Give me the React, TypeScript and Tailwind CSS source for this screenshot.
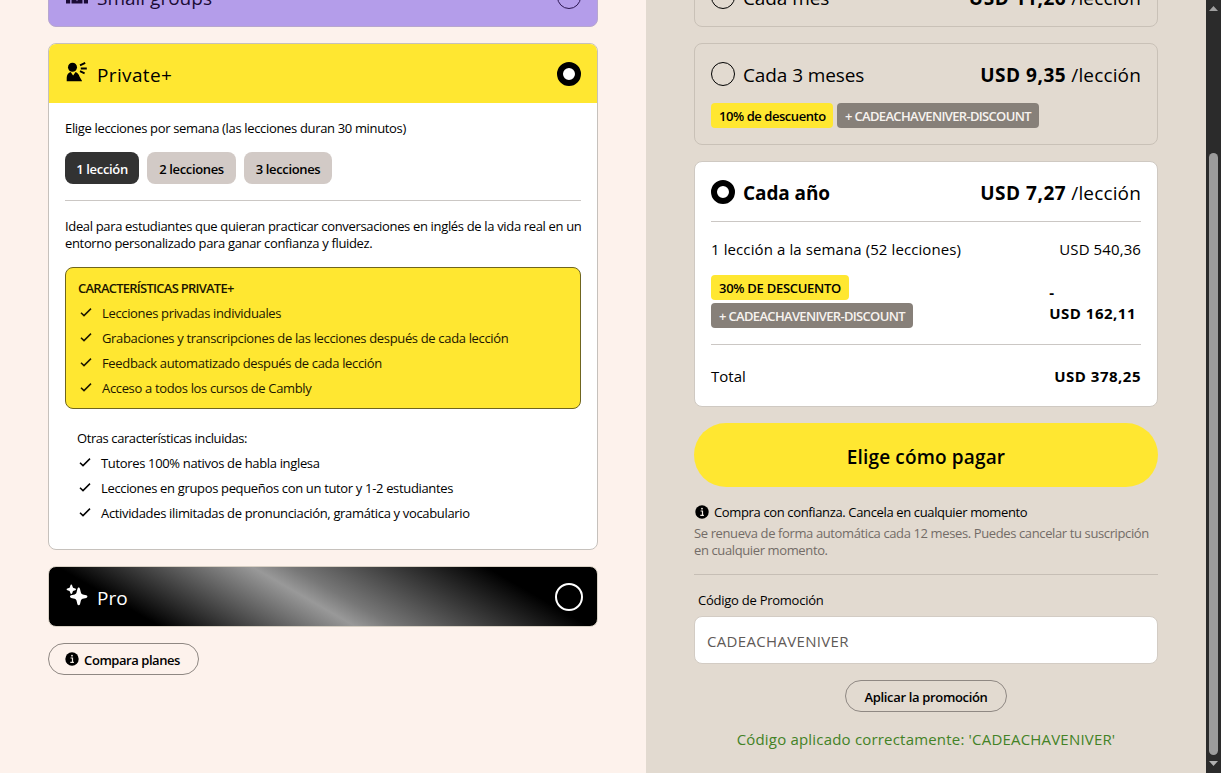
import React from "react";
import { clsx } from "clsx";

const planFeatures: string[] = [
  "Lecciones privadas individuales",
  "Grabaciones y transcripciones de las lecciones después de cada lección",
  "Feedback automatizado después de cada lección",
  "Acceso a todos los cursos de Cambly",
];

const otherFeatures: string[] = [
  "Tutores 100% nativos de habla inglesa",
  "Lecciones en grupos pequeños con un tutor y 1-2 estudiantes",
  "Actividades ilimitadas de pronunciación, gramática y vocabulario",
];

const lessonOptions: { label: string; className: string }[] = [
  { label: "1 lección", className: "w-[74px] bg-[#323232] text-white" },
  { label: "2 lecciones", className: "w-[89px] bg-[#d2cac6] text-black" },
  { label: "3 lecciones", className: "w-[88px] bg-[#d2cac6] text-black" },
];

const GroupIcon = () => (
  <svg width="24" height="24" viewBox="0 0 24 24" fill="currentColor" className="-mt-[3px]">
    <circle cx="12" cy="7" r="4" />
    <circle cx="5" cy="9" r="3" />
    <circle cx="19" cy="9" r="3" />
    <path d="M1 19.500v-3.500c0-2 1-3.500 3-3.500l1.200 1.500v5.500zM6.500 19.500V17c0-2.500 1.500-4.500 3.500-4.500l2 5 2-5c2 0 3.500 2 3.500 4.500v2.500zM18.800 19.500V14l1.200-1.500c2 0 3 1.500 3 3.500v3.500z" />
  </svg>
);

const SpeakerIcon = () => (
  <svg width="24" height="24" viewBox="0 0 24 24" fill="currentColor" className="-mt-[3px]">
    <circle cx="9.500" cy="7.200" r="4.500" />
    <path d="M3.700 21.200v-3.400c0-3 1.600-5.300 4-5.800l2.400 3.400 2.500-3.400c1.900.6 3.200 2.200 4 4.800l2.600 4.400z" />
    <path
      d="M17 5.400l5.200-2.600M17.800 8.500h6M17 11.200l4.600 2.200"
      fill="none"
      stroke="currentColor"
      strokeWidth="1.900"
    />
  </svg>
);

const SparkleIcon = () => (
  <svg width="24" height="24" viewBox="0 0 24 24" fill="currentColor" className="-mt-[3px]">
    <path d="M14.700 4.500c.7 0 1.100.7 1.300 1.500l.9 3.600c.2.900.9 1.600 1.800 1.800l3.600.9c1.500.5 1.500 2.100 0 2.600l-3.600.9c-.9.200-1.600.9-1.800 1.800l-.9 3.600c-.5 1.500-2.100 1.500-2.600 0l-.9-3.600c-.2-.9-.9-1.600-1.800-1.800l-3.600-.9c-1.500-.5-1.500-2.100 0-2.600l3.600-.9c.9-.2 1.600-.9 1.800-1.800l.9-3.600c.2-.8.600-1.500 1.300-1.500z" />
    <path d="M7.300 1.500c.5 0 .8.400.9.900l.5 1.500c.1.500.5.900 1 1l1.500.5c1 .3 1 1.500 0 1.800l-1.500.5c-.5.100-.9.500-1 1l-.5 1.500c-.3 1-1.500 1-1.800 0l-.5-1.500c-.1-.5-.5-.9-1-1l-1.500-.5c-1-.3-1-1.500 0-1.800l1.500-.5c.5-.1.900-.5 1-1l.5-1.500c.1-.5.400-.9.900-.9z" />
  </svg>
);

const InfoIcon = () => (
  <svg width="14" height="14" viewBox="0 0 14 14" className="shrink-0">
    <circle cx="7" cy="7" r="6.700" fill="#000" />
    <path
      d="M5.600 6h1.900v4.300M5.300 10.300h3.600"
      stroke="#f3ece4"
      strokeWidth="1.200"
      fill="none"
    />
    <circle cx="7" cy="3.700" r=".9" fill="#f3ece4" />
  </svg>
);

const FeatureList = ({ items }: { items: string[] }) => (
  <ul>
    {items.map((item) => (
      <li key={item} className="flex h-[25px] items-center">
        <svg
          width="16"
          height="16"
          viewBox="0 0 16 16"
          className="mr-2 -mt-[3px]"
          fill="none"
          stroke="currentColor"
          strokeWidth="1.500"
        >
          <path d="M3 8.700l3 2.900 7-7" />
        </svg>
        {item}
      </li>
    ))}
  </ul>
);

const Radio = ({ checked = false }: { checked?: boolean }) => (
  <span
    className={clsx(
      "block h-6 w-6 shrink-0 rounded-full",
      checked ? "border-[6px] border-black bg-white" : "border border-black",
    )}
  />
);

const Price = ({ amount }: { amount: string }) => (
  <span className="mt-[3px] ml-auto text-[19px] tracking-[0.15px]">
    <b className="tracking-[0.52px]">{amount}</b> /lección
  </span>
);

const badge =
  "flex h-[25px] items-center rounded-[4px] px-2 pt-0.5 text-[13px] font-semibold whitespace-nowrap";

const DiscountCode = () => (
  <span className={clsx(badge, "w-[202px] bg-[#878079] tracking-[-0.67px] text-[#f7f3ef]")}>
    + CADEACHAVENIVER-DISCOUNT
  </span>
);

const Plans = () => (
  <section className="flex w-[646px] flex-col gap-4 bg-[#fdf2ec] pl-12">
    <div className="-mt-[33px] flex h-[60px] w-[550px] shrink-0 items-center rounded-lg border border-[#b7a7cf] bg-[#b49dea] px-4 text-[#1b0b35]">
      <GroupIcon />
      <span className="mt-[3px] ml-2 text-[19px] font-medium">Small groups</span>
      <span className="ml-auto h-6 w-6 rounded-full border border-[#2b1650]" />
    </div>

    <div className="h-[507px] w-[550px] shrink-0 overflow-hidden rounded-lg border border-[#c6c1bc] bg-white">
      <div className="flex h-[59px] items-center bg-[#ffe731] pr-4 pl-[14px]">
        <SpeakerIcon />
        <span className="mt-[3px] ml-[10px] text-[19px] font-medium tracking-[0.35px]">
          Private+
        </span>
        <span className="ml-auto">
          <Radio checked />
        </span>
      </div>

      <div className="px-4 pt-[17px] text-[13px] leading-[17px] tracking-[-0.34px]">
        <p>Elige lecciones por semana (las lecciones duran 30 minutos)</p>
        <div className="mt-[15px] flex gap-2">
          {lessonOptions.map(({ label, className }) => (
            <button
              key={label}
              className={clsx("h-8 rounded-lg pt-0.5 font-semibold", className)}
            >
              {label}
            </button>
          ))}
        </div>
        <hr className="mt-4 border-[#cbc7c4]" />
        <p className="mt-[17px] whitespace-nowrap">
          Ideal para estudiantes que quieran practicar conversaciones en inglés de la vida real en un
          <br />
          entorno personalizado para ganar confianza y fluidez.
        </p>

        <div className="mt-[15px] h-[142px] rounded-lg border border-[#6f651f] bg-[#ffe731] px-3 pt-2 text-[#1c1600]">
          <h3 className="h-[25px] leading-[25px] font-semibold tracking-[-0.75px]">
            CARACTERÍSTICAS PRIVATE+
          </h3>
          <FeatureList items={planFeatures} />
        </div>

        <div className="mt-[17px] px-3">
          <h3 className="h-[25px] leading-[25px] tracking-[-0.42px]">
            Otras características incluidas:
          </h3>
          <FeatureList items={otherFeatures} />
        </div>
      </div>
    </div>

    <div className="flex h-[61px] w-[550px] shrink-0 items-center rounded-lg border border-[#d8d0c4] bg-[linear-gradient(30deg,#000_17%,#999_47%,#777_53%,#000_83%)] pr-4 pl-[15px] text-white">
      <SparkleIcon />
      <span className="mt-[3px] ml-[9px] text-[19px]">Pro</span>
      <span className="ml-auto -mr-0.5 h-7 w-7 rounded-full border-2 border-white" />
    </div>

    <button className="flex h-8 w-[151px] shrink-0 items-center justify-center gap-[5px] rounded-full border border-[#8f8883] pr-0.5 text-[13px] font-semibold tracking-[-0.45px]">
      <InfoIcon />
      <span className="mt-[3px]">Compara planes</span>
    </button>
  </section>
);

const Checkout = () => (
  <section className="flex w-[560px] flex-col bg-[#e2dad0] px-12">
    <div className="-mt-[33px] flex h-[60px] shrink-0 items-center rounded-lg border border-[#c9c1b7] px-4">
      <Radio />
      <span className="mt-[3px] ml-2 text-[19px] tracking-[-0.1px]">Cada mes</span>
      <Price amount="USD 11,26" />
    </div>

    <div className="mt-4 h-[102px] shrink-0 rounded-lg border border-[#c9c1b7] px-4">
      <div className="flex h-[59px] items-center">
        <Radio />
        <span className="mt-[3px] ml-2 text-[19px] tracking-[-0.1px]">Cada 3 meses</span>
        <Price amount="USD 9,35" />
      </div>
      <div className="flex gap-1">
        <span className={clsx(badge, "w-[122px] bg-[#ffe731] tracking-[-0.45px]")}>
          10% de descuento
        </span>
        <DiscountCode />
      </div>
    </div>

    <div className="mt-4 h-[246px] shrink-0 rounded-lg border border-[#cfc9c2] bg-white px-4 text-[15px]">
      <div className="flex h-[59px] items-center">
        <Radio checked />
        <b className="mt-[3px] ml-2 text-[19px] tracking-[-0.1px]">Cada año</b>
        <Price amount="USD 7,27" />
      </div>
      <hr className="border-[#cbc7c4]" />
      <div className="flex h-[53px] items-center justify-between pt-0.5 tracking-[0.1px]">
        <span>1 lección a la semana (52 lecciones)</span>
        <span>USD 540,36</span>
      </div>
      <div className="flex h-[69px] justify-between">
        <div className="flex flex-col items-start gap-[3px]">
          <span className={clsx(badge, "w-[138px] bg-[#ffe731] tracking-[-0.28px]")}>
            30% DE DESCUENTO
          </span>
          <DiscountCode />
        </div>
        <b className="mt-[7px] mr-[5px] leading-[21px] tracking-[0.5px]">
          -<br />
          USD 162,11
        </b>
      </div>
      <hr className="border-[#cbc7c4]" />
      <div className="flex h-[61px] items-center justify-between pt-0.5">
        <span>Total</span>
        <b className="tracking-[0.5px]">USD 378,25</b>
      </div>
    </div>

    <button className="mt-4 h-16 shrink-0 rounded-full bg-[#ffe731] pt-1 text-[19px] font-semibold tracking-[0.15px]">
      Elige cómo pagar
    </button>

    <div className="mt-4 flex h-[18px] items-center gap-[5px] pl-px text-[13px] tracking-[-0.36px]">
      <InfoIcon />
      <span className="mt-0.5">Compra con confianza. Cancela en cualquier momento</span>
    </div>
    <p className="mt-1 text-[13px] leading-[17px] tracking-[-0.38px] whitespace-nowrap text-[#736c67]">
      Se renueva de forma automática cada 12 meses. Puedes cancelar tu suscripción
      <br />
      en cualquier momento.
    </p>
    <hr className="mt-[15px] border-[#c6beb5]" />
    <label className="mt-[15px] ml-1 text-[13px] leading-5 tracking-[-0.25px]">
      Código de Promoción
    </label>
    <input
      className="mt-[6px] h-12 rounded-lg border border-[#d3ccc4] bg-white px-3 pt-0.5 text-[15px] tracking-[0.33px] text-[#5f5a57]"
      defaultValue="CADEACHAVENIVER"
    />
    <button className="mt-4 h-8 w-[162px] shrink-0 self-center rounded-full border border-[#8f8883] pt-[3px] text-[13px] font-semibold tracking-[-0.33px]">
      Aplicar la promoción
    </button>
    <p className="mt-[15px] text-center text-[15px] leading-6 tracking-[0.19px] text-[#438226]">
      Código aplicado correctamente: 'CADEACHAVENIVER'
    </p>
  </section>
);

const Scrollbar = () => (
  <div className="flex w-[15px] flex-col items-center bg-[#2b2b2b]">
    <svg width="9" height="5" viewBox="0 0 9 5" className="mt-[6px] shrink-0" fill="#a0a0a0">
      <path d="M4.500 0L9 5H0z" />
    </svg>
    <div className="mt-[142px] h-[602px] w-[9px] shrink-0 rounded-full bg-[#9c9c9c]" />
    <svg width="9" height="5" viewBox="0 0 9 5" className="mt-[6px] shrink-0" fill="#b0b0b0">
      <path d="M0 0h9L4.500 5z" />
    </svg>
  </div>
);

export default function App() {
  return (
    <main className="flex h-[773px] w-[1221px] overflow-hidden font-['Open_Sans','Noto_Sans',sans-serif] text-black">
      <Plans />
      <Checkout />
      <Scrollbar />
    </main>
  );
}
